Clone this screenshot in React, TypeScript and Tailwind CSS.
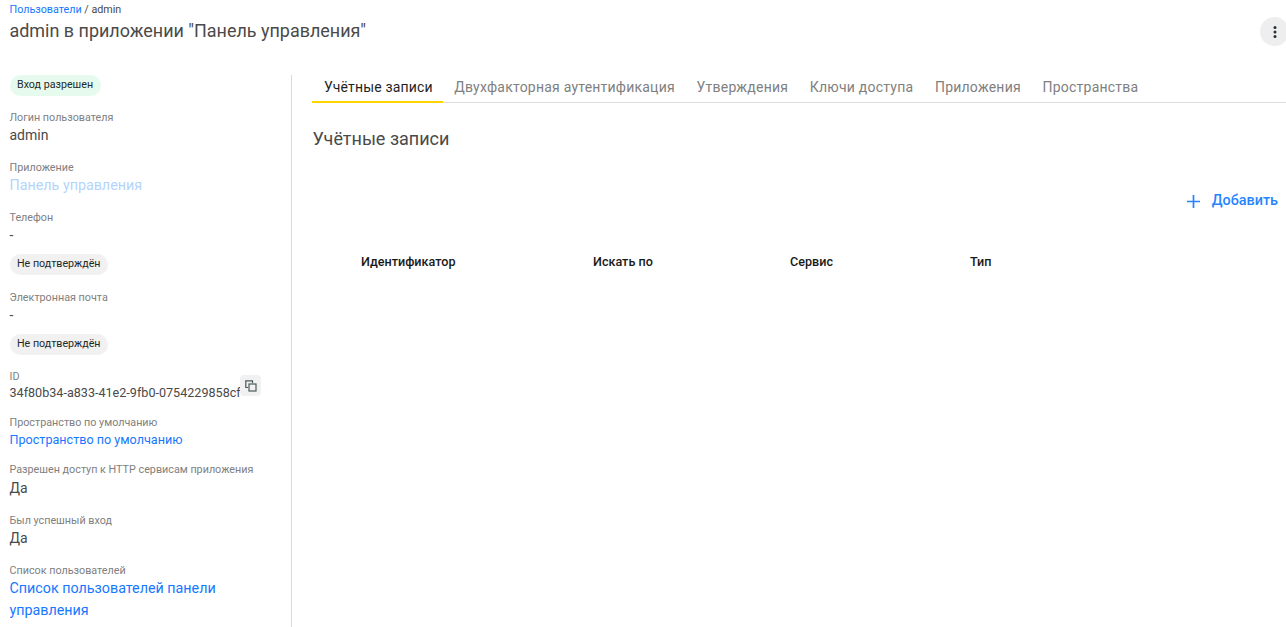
import React from "react";

const Label = ({ children }: { children: React.ReactNode }) => (
  <div className="translate-y-px whitespace-nowrap text-[10.78px] leading-[16px] text-[#808080]">{children}</div>
);
const Chip = ({ children, green }: { children: React.ReactNode; green?: boolean }) => (
  <div className={`flex h-[21px] w-fit items-center rounded-full px-[7.5px] text-[10.7px] text-[#1f2a2a] ${green ? "bg-[#e6fbee]" : "bg-[#f1f1f1]"}`}>
    {children}
  </div>
);

const tabs = ["Двухфакторная аутентификация", "Утверждения", "Ключи доступа", "Приложения", "Пространства"];

export default function App() {
  return (
    <div className="h-[627px] w-[1286px] overflow-hidden bg-white font-['Roboto',sans-serif] text-[#4a4a4a]">
      <header className="relative h-[75px] pl-[9.5px]">
        <div className="pt-[3px] text-[10.75px] leading-[14px]">
          <span className="text-[#1677ff]">Пользователи</span> / admin
        </div>
        <h1 className="mt-[2px] text-[17.95px] leading-[24px]">admin в приложении "Панель управления"</h1>
        <button className="absolute right-[-3px] top-[17px] flex h-[29px] w-[29px] items-center justify-center rounded-full bg-[#eeeeee]">
          <svg width="4" height="14" viewBox="0 0 4 14" fill="#263238">
            <circle cx="2" cy="2.5" r="1.5" /><circle cx="2" cy="7" r="1.5" /><circle cx="2" cy="11.5" r="1.5" />
          </svg>
        </button>
      </header>
      <div className="flex h-[552px]">
        <aside className="w-[292px] shrink-0 border-r border-[#d9d9d9] pl-[9.5px] pr-[30px]">
          <Chip green>Вход разрешен</Chip>
          <div className="mt-[13px]"><Label>Логин пользователя</Label><div className="text-[14px] leading-[20px] text-[#4a4a4a]">admin</div></div>
          <div className="mt-[14px]"><Label>Приложение</Label><div className="text-[14.3px] leading-[20px] text-[#b3d4fc]">Панель управления</div></div>
          <div className="mt-[14px]"><Label>Телефон</Label><div className="text-[14px] leading-[20px]">-</div></div>
          <div className="mt-[9px]"><Chip>Не подтверждён</Chip></div>
          <div className="mt-[14px]"><Label>Электронная почта</Label><div className="text-[14px] leading-[20px]">-</div></div>
          <div className="mt-[9px]"><Chip>Не подтверждён</Chip></div>
          <div className="relative mt-[13px]">
            <Label>ID</Label>
            <div className="whitespace-nowrap text-[12.6px] leading-[18px] text-[#4a4a4a]">34f80b34-a833-41e2-9fb0-0754229858cf</div>
            <div className="absolute left-[230.5px] top-[7px] flex h-[21px] w-[21px] items-center justify-center rounded-[4px] bg-[#f1f1f1]">
              <svg width="12" height="12" viewBox="0 0 12 12" fill="none" stroke="#4a5a5a" strokeWidth="1.2">
                <path d="M7.5 3V.8H.8v6.7H3" /><rect x="4" y="4" width="7" height="7" />
              </svg>
            </div>
          </div>
          <div className="mt-[12px]"><Label>Пространство по умолчанию</Label><div className="text-[12.6px] leading-[20px] text-[#1677ff]">Пространство по умолчанию</div></div>
          <div className="mt-[11px]"><Label>Разрешен доступ к HTTP сервисам приложения</Label><div className="text-[14px] leading-[22px]">Да</div></div>
          <div className="mt-[13px]"><Label>Был успешный вход</Label><div className="text-[14px] leading-[20px]">Да</div></div>
          <div className="mt-[14px]"><Label>Список пользователей</Label><div className="-mt-px text-[14.3px] leading-[22px] text-[#1677ff]">Список пользователей панели управления</div></div>
        </aside>
        <main className="min-w-0 flex-1 pl-[20px]">
          <nav className="flex h-[28px] items-start border-b border-[#dddddd]">
            <div className="h-[28px] border-b-2 border-[#ffd600] pl-[12px] pr-[10.5px] text-[14px] leading-[24px] tracking-[0.17px] text-[#1f1f1f]">Учётные записи</div>
            {tabs.map((t) => (
              <div key={t} className="px-[10.85px] text-[14px] leading-[24px] tracking-[0.22px] text-[#808080]">{t}</div>
            ))}
          </nav>
          <h2 className="ml-[0.5px] mt-[24px] text-[18px] leading-[24px]">Учётные записи</h2>
          <div className="mt-[38px] flex items-center justify-end gap-[12px] pr-[8px] text-[14.4px] font-medium leading-[24px] text-[#2684ff]">
            <svg width="13" height="13" viewBox="0 0 13 13" stroke="#2684ff" strokeWidth="1.7"><path d="M6.5 0v13M0 6.5h13" /></svg>
            Добавить
          </div>
          <div className="ml-[49px] mt-[37px] grid grid-cols-[232px_197px_180px_auto] text-[12.6px] font-medium leading-[24px] text-[#1a1a1a]">
            <div>Идентификатор</div><div>Искать по</div><div>Сервис</div><div>Тип</div>
          </div>
        </main>
      </div>
    </div>
  );
}
